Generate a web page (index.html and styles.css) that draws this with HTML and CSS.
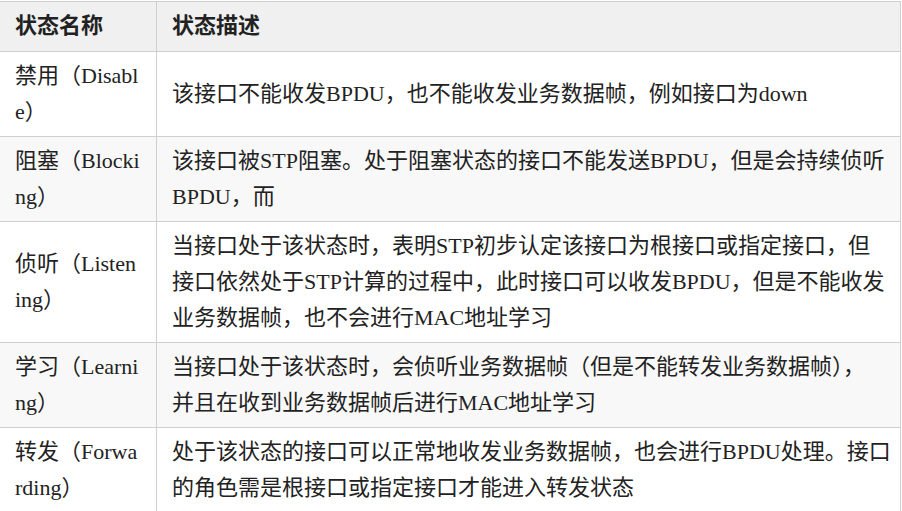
FILE: index.html
```html
<!DOCTYPE html>
<html lang="zh-CN">
<head>
<meta charset="utf-8">
<title>状态</title>
<link rel="stylesheet" href="styles.css">
</head>
<body>
<div class="table">
  <div class="row head">
    <div class="cell c1">状态名称</div>
    <div class="cell c2">状态描述</div>
  </div>
  <div class="row">
    <div class="cell c1">禁用（Disabl<br>e）</div>
    <div class="cell c2">该接口不能收发BPDU，也不能收发业务数据帧，例如接口为down</div>
  </div>
  <div class="row alt">
    <div class="cell c1">阻塞（Blocki<br>ng）</div>
    <div class="cell c2">该接口被STP阻塞。处于阻塞状态的接口不能发送BPDU，但是会持续侦听<br>BPDU，而</div>
  </div>
  <div class="row">
    <div class="cell c1">侦听（Listen<br>ing）</div>
    <div class="cell c2">当接口处于该状态时，表明STP初步认定该接口为根接口或指定接口，但<br>接口依然处于STP计算的过程中，此时接口可以收发BPDU，但是不能收发<br>业务数据帧，也不会进行MAC地址学习</div>
  </div>
  <div class="row alt">
    <div class="cell c1">学习（Learni<br>ng）</div>
    <div class="cell c2">当接口处于该状态时，会侦听业务数据帧（但是不能转发业务数据帧），<br>并且在收到业务数据帧后进行MAC地址学习</div>
  </div>
  <div class="row">
    <div class="cell c1">转发（Forwa<br>rding）</div>
    <div class="cell c2">处于该状态的接口可以正常地收发业务数据帧，也会进行BPDU处理。接口<br>的角色需是根接口或指定接口才能进入转发状态</div>
  </div>
</div>
</body>
</html>
```

FILE: styles.css
```css
html, body {
  margin: 0;
  padding: 0;
  background: #ffffff;
}

body {
  font-family: "Liberation Serif", "Noto Sans CJK SC", serif;
  font-size: 22px;
  line-height: 36px;
  color: #222222;
}

.table {
  width: 901px;
  margin-top: 1px;
  border-top: 1px solid #cfcfcf;
}

.row {
  display: grid;
  grid-template-columns: 157px 744px;
  align-items: stretch;
  border-bottom: 1px solid #cfcfcf;
}

.row.alt {
  background: #f8f8f8;
}

.row.head {
  background: #f0f0f0;
  font-weight: bold;
}

.cell {
  display: flex;
  flex-direction: column;
  justify-content: center;
  padding: 6px 8px 6px 15px;
  border-right: 1px solid #cfcfcf;
  white-space: nowrap;
}

.c1 {
  padding-right: 15px;
}

.head .cell {
  padding-top: 6px;
  padding-bottom: 7px;
}
```
